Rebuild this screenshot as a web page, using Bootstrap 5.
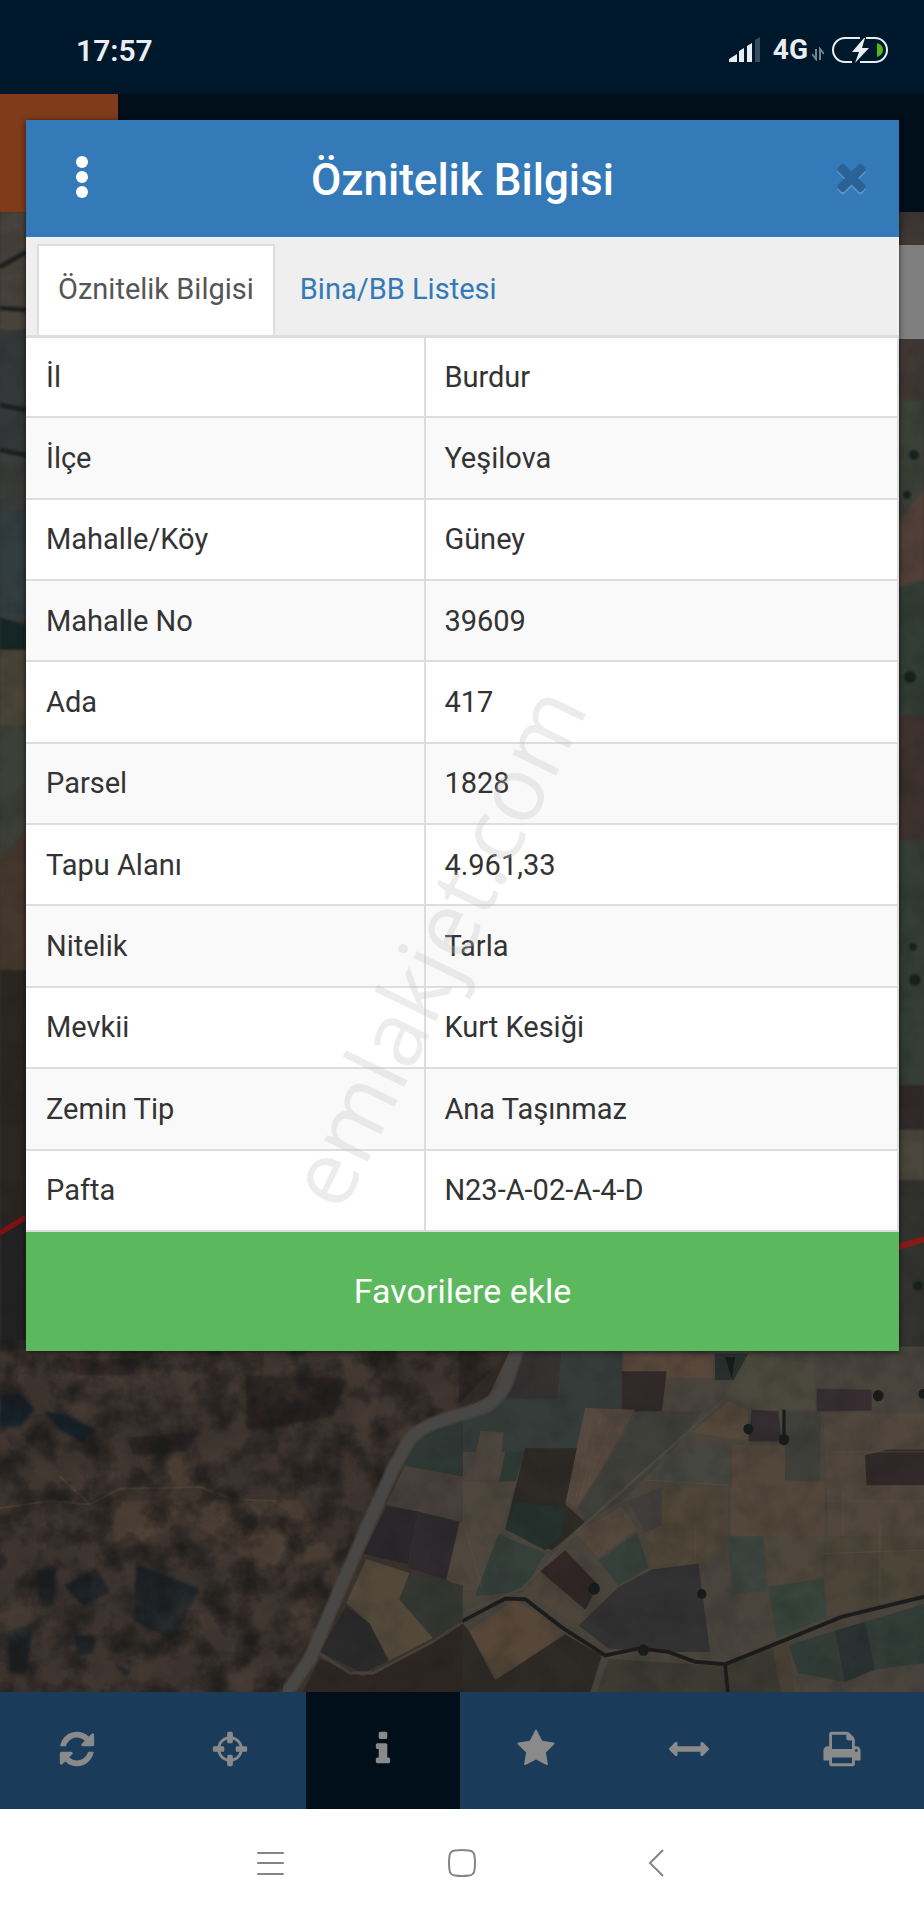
<!DOCTYPE html>
<html lang="tr">
<head>
  <meta charset="UTF-8">
  <title>Öznitelik Bilgisi</title>
  <meta name="viewport" content="width=device-width, initial-scale=1">
  <link href="https://cdn.jsdelivr.net/npm/bootstrap@5.3.2/dist/css/bootstrap.min.css" rel="stylesheet">
  <style>
    body { font-family: Roboto, "Liberation Sans", sans-serif; font-size: 29px; color: #333; background: #fff; }

    /* phone status bar */
    .status-bar { height: 94px; padding: 6px 32px 0 76px; background: #00182b; color: #e8eef4; font-size: 30px; font-weight: 600; }
    .net-label { font-size: 28px; font-weight: 700; }

    /* dimmed app behind the dialog */
    .app-header { height: 118px; background: #000f1a; }
    .app-logo { width: 118px; background: #803b1b; }
    .map-area { background: #3a322d; overflow: hidden; }
    .map-area svg { position: absolute; inset: 0; width: 100%; height: 100%; }
    .map-panel { position: absolute; right: 0; top: 33px; width: 60px; height: 94px; background: #7f7f7f; }
    .tool-bar { background: #1a3c5a; padding-right: 5px; }
    .tool-btn { height: 117px; border: 0; padding: 0 0 6px; background: transparent; color: #8a8a8a; }
    .tool-btn.active { background: #000f1a; }
    .tool-btn svg { width: 40px; height: 40px; }
    .sys-nav { height: 111px; background: #fff; }
    .sys-nav button { width: 192px; border: 0; padding: 0 0 6px; background: transparent; }

    /* dialog lies over the map */
    .info-dialog { position: absolute; top: 120px; left: 26px; right: 25px; background: #fff; box-shadow: 0 1px 6px rgba(0, 0, 0, .6); }
    .dialog-head { height: 117px; background: #357ab8; color: #fff; padding: 2px 26px 0; }
    .dialog-head h1 { font-size: 44px; line-height: 52px; font-weight: 500; }
    .head-btn { border: 0; background: transparent; width: 60px; height: 60px; padding: 0; }
    .dialog-tabs { background: #efefef; border-bottom: 3px solid #ddd; padding: 7px 11px 0; }
    .dialog-tabs .nav-link { height: 91px; padding: 0 19px 2px; border: 2px solid transparent; border-bottom: 0; border-radius: 0; margin: 0; color: #337ab7; }
    .dialog-tabs .nav-link.active { background: #fff; border-color: #ddd; color: #555; }
    .info-table { table-layout: fixed; height: 894px; margin: 0; border-right: 2px solid #ddd; --bs-table-color: #333; }
    .info-table th, .info-table td { font-weight: 400; padding: 0 18px; line-height: 40px; border: 0; border-bottom: 2px solid #ddd; vertical-align: middle; box-shadow: none; }
    .info-table th { width: 45.8%; padding-left: 20px; border-right: 2px solid #ddd; }
    .info-table tr:nth-child(even) > * { background: #f9f9f9; }
    .fav-btn { height: 119px; border: 0; background: #5cb85c; color: #fff; font-size: 34px; }
    .watermark { position: absolute; inset: 0; width: 100%; height: 100%; pointer-events: none; }
    .watermark text { font-family: "Open Sans", "Noto Sans", sans-serif; font-size: 90px; fill: #bfbfbf; fill-opacity: .3; }
  </style>
</head>
<body>

<div class="d-flex flex-column min-vh-100 position-relative">

  <div class="status-bar d-flex justify-content-between align-items-center">
    <span>17:57</span>
    <div class="d-flex align-items-center">
      <svg width="32" height="26" viewBox="0 0 32 26" fill="#e8eef4">
        <path d="M0 25V22L8 17V25zM10 25V14L15 11V25zM18 25V9L23 6V25z"/>
        <path d="M26 25V3L31 0V25z" fill="#364a59"/>
      </svg>
      <span class="net-label ms-2 ps-1">4G</span>
      <svg class="ms-1 mt-2" width="12" height="14" viewBox="0 0 12 14" fill="none" stroke="#76828c" stroke-width="2">
        <path d="M4 2V12L0 7M8 13V2L12 7"/>
      </svg>
      <svg class="ms-1" width="64" height="28" viewBox="0 0 64 28">
        <g fill="none" stroke="#e8eef4" stroke-width="2">
          <path d="M32 2H17A12 12 0 0 0 17 26H24M38 2H47A12 12 0 0 1 47 26H32"/>
        </g>
        <path d="M36 2L24 16H31L27 27L41 12H34L37 2z" fill="#e8eef4"/>
        <path d="M49 7Q55 9 55 14Q55 19 49 21z" fill="#54b51c"/>
      </svg>
    </div>
  </div>

  <div class="app-header d-flex">
    <div class="app-logo"></div>
  </div>

  <!-- satellite map -->
  <div class="map-area flex-grow-1 position-relative">
    <svg viewBox="0 212 924 1480" preserveAspectRatio="xMidYMid slice" aria-hidden="true">
      <defs>
        <filter id="soft" x="0" y="0" width="1" height="1"><feGaussianBlur stdDeviation="1"/></filter>
        <filter id="smudge"><feGaussianBlur stdDeviation="5"/></filter>
        <filter id="grain" x="0" y="0" width="1" height="1" color-interpolation-filters="sRGB">
          <feTurbulence type="fractalNoise" baseFrequency=".035" numOctaves="5" seed="8"/>
          <feColorMatrix values="0 0 0 0 .1  0 0 0 0 .1  0 0 0 0 .1  2.4 0 0 0 -.95"/>
        </filter>
        <filter id="glow" x="0" y="0" width="1" height="1" color-interpolation-filters="sRGB">
          <feTurbulence type="fractalNoise" baseFrequency=".02" numOctaves="5" seed="21"/>
          <feColorMatrix values="0 0 0 0 .38  0 0 0 0 .31  0 0 0 0 .26  0 2.4 0 0 -1"/>
        </filter>
        <clipPath id="scrub"><path d="M0 1340H520L455 1408L410 1436L385 1490L285 1692H0z"/></clipPath>
      </defs>
      <rect y="212" width="924" height="1480" fill="#3c332e"/>

      <!-- narrow strips beside the dialog -->
      <g filter="url(#soft)">
        <path fill="#46423b" d="M0 212H26V330H0z"/>
        <path fill="#363838" d="M0 330H26V450H0z"/>
        <path fill="#3a3c3a" d="M0 450H26V510H0z"/>
        <path fill="#333d3f" d="M0 510H26V620H0z"/>
        <path fill="#182627" d="M0 617L26 625V650H0z"/>
        <path fill="#4c4439" d="M0 650H26V725H0z"/>
        <path fill="#3e4039" d="M0 725H26V830L0 860z"/>
        <path fill="#45392f" d="M0 860L26 832V970H0z"/>
        <path fill="#2a2624" d="M0 970H26V1230H0z"/>
        <path fill="#222223" d="M0 1230L26 1216V1350H0z"/>
        <path stroke="#1a2020" stroke-width="5" d="M0 267L26 252M0 308L26 310M0 405L26 410M0 450L26 455"/>
        <path fill="#403936" d="M899 212H924V400H899z"/>
        <path fill="#3a4038" d="M899 400H924V520H899z"/>
        <path fill="#514137" d="M899 520L924 490V580L899 587z"/>
        <path fill="#303c35" d="M899 587L924 580V715H899z"/>
        <path fill="#3c302e" d="M899 715H924V840H899z"/>
        <path fill="#363d39" d="M899 840H924V1085H899z"/>
        <path fill="#332c2a" d="M899 1085H924V1130H899z"/>
        <path fill="#4c463d" d="M899 1130H924V1180H899z"/>
        <path fill="#33312f" d="M899 1180H924V1360H899z"/>
        <g fill="#12201f">
          <circle cx="914" cy="455" r="5"/><circle cx="907" cy="495" r="4"/><circle cx="910" cy="677" r="6"/>
          <circle cx="915" cy="980" r="6"/><circle cx="913" cy="947" r="4"/><circle cx="918" cy="1286" r="5"/>
        </g>
      </g>

      <!-- fields, right side -->
      <g transform="translate(462 1150) scale(.333 .351)" filter="url(#soft)">
        <path fill="#49443c" d="M0 560H1400V1560H0z"/>
        <path fill="#322a27" d="M-10 560H150L80 700L-10 750z"/>
        <path fill="#363330" d="M160 575H300L285 720L90 710z"/>
        <path fill="#363d3a" d="M300 575H480V740L340 870L180 860L-10 860V780L80 710H285z"/>
        <path fill="#58473a" d="M485 580H755V650H485z"/>
        <path fill="#2b302d" d="M760 580H860L830 655H760z"/>
        <path fill="#322c2a" d="M480 630H615L600 745H480z"/>
        <path fill="#4c483e" d="M860 580L1060 610V740H880L790 700z"/>
        <path fill="#574a3f" d="M370 735L520 740L410 920L345 1020L310 1000z"/>
        <path fill="#413f3b" d="M530 745H720L640 850L480 1000L370 1060L350 1020z"/>
        <path fill="#54483a" d="M690 805L800 715L860 740V830z"/>
        <path fill="#362f30" d="M870 740L950 745L960 830H860z"/>
        <path fill="#413f3b" d="M975 745H1078L1075 945L970 940z"/>
        <path fill="#372f30" d="M1065 680L1230 683V742L1065 745z"/>
        <path fill="#51473c" d="M1085 750H1400V1100H1100z"/>
        <path fill="#52463a" d="M810 840H970V945H1090V1100H810z"/>
        <path fill="#45473f" d="M600 870L800 845V960L570 940z"/>
        <path fill="#32292a" d="M1210 870L1280 853H1390V955H1215z"/>
        <path fill="#4d443e" d="M55 800L125 805L110 945L25 940z"/>
        <path fill="#2e3a34" d="M130 860H190L160 945H112z"/>
        <path fill="#2d2a28" d="M190 850H345L310 1010L370 1060L270 1140L130 1080z"/>
        <path fill="#27302e" d="M165 1000L310 1020L300 1100L250 1140L130 1080z"/>
        <path fill="#50473c" d="M-5 945H165L110 1100L45 1255H-5z"/>
        <path fill="#353f3a" d="M110 1095L250 1150L180 1260L40 1270z"/>
        <path fill="#403e3b" d="M500 1000L600 960V1070L550 1090z"/>
        <path fill="#55493d" d="M340 1090L480 1015L525 1080L410 1160z"/>
        <path fill="#4f4539" d="M600 960H800V1100L730 1180L570 1195L550 1090L600 1070z"/>
        <path fill="#343f3b" d="M410 1170L525 1090L560 1190L470 1240z"/>
        <path fill="#312725" d="M235 1200L310 1140L410 1240L370 1310z"/>
        <path fill="#4f443a" d="M180 1260L235 1210L365 1325L350 1355z"/>
        <path fill="#333330" d="M470 1245L570 1195L710 1178L745 1430L620 1430L440 1420L350 1355z"/>
        <path fill="#3c4541" d="M800 1100H905L915 1255L810 1265z"/>
        <path fill="#50473b" d="M905 1100H1090L1080 1225L920 1245z"/>
        <path fill="#37443a" d="M920 1245L1085 1220L1095 1330L945 1390z"/>
        <path fill="#4d4439" d="M1090 1100H1400V1260L1095 1330z"/>
        <path fill="#564638" d="M20 1370L160 1280L310 1375L110 1510z"/>
        <path fill="#2d2b28" d="M-5 1340L20 1370L100 1510L310 1380L420 1440L380 1560H-5z"/>
        <path fill="#3b3b33" d="M440 1450L780 1470L940 1410L1000 1560H400z"/>
        <path fill="#323d37" d="M980 1410L1400 1290V1460L1240 1480L1150 1515L1010 1490z"/>
        <path fill="#2a3230" d="M1120 1370L1210 1345L1240 1480L1150 1515z"/>
        <path fill="#4a4034" d="M930 1400L980 1395L1000 1560H960z"/>
        <path fill="none" stroke="#4e493f" stroke-width="8" d="M800 700L340 1090L180 1250L0 1320"/>
        <path fill="none" stroke="#1e1e1b" stroke-width="11" d="M-10 1348L130 1278L190 1280L300 1360L430 1440L530 1420L620 1430L700 1458L790 1465L960 1400L1140 1330L1400 1270M790 1465L800 1560"/>
        <path fill="none" stroke="#65533f" stroke-width="3" opacity=".5" d="M390 750L340 1000M420 750L355 990M460 750L370 970M0 1040L60 1250M810 960V1100M1145 970V1100M1255 1060V1290M550 940L800 955M700 1070V1170M1080 1000H1400M1100 860H1400M1080 1150L1390 1140"/>
        <g fill="#191c1b">
          <circle cx="1250" cy="700" r="16"/><circle cx="860" cy="795" r="15"/><circle cx="967" cy="825" r="16"/>
          <path d="M962 740H972V820H962zM790 590H820L810 650z"/>
          <circle cx="397" cy="1250" r="17"/><circle cx="720" cy="1265" r="14"/><circle cx="545" cy="1425" r="16"/><circle cx="1385" cy="695" r="14"/>
        </g>
      </g>

      <!-- scrub and road, left side -->
      <g transform="translate(0 1150) scale(.333 .351)">
        <g filter="url(#smudge)">
          <path fill="#15222a" d="M0 700L60 690L105 740L60 790H0zM130 745L200 750L290 800L250 835L180 800z"/>
          <path fill="#1d2225" d="M110 1200L170 1190L160 1300H120zM190 1240L290 1190L330 1260L250 1300zM410 1180L600 1250L520 1400L400 1340zM220 1380L290 1385L280 1435H230zM20 1370L100 1350L80 1490H30zM340 1465L395 1480L380 1505z"/>
          <path fill="#2a2423" d="M190 590L420 600L400 640L220 640zM740 640L1040 650L1000 760L740 800zM380 820L600 800L560 860L400 870z"/>
          <path fill="#463a32" d="M330 1000L900 1000L1000 1160L800 1200L560 1050L350 1150zM420 870L600 880L560 960L440 950z"/>
        </g>
        <g filter="url(#soft)">
          <path fill="none" stroke="#4e4036" stroke-width="6" d="M0 1020L150 1000L270 1010L360 965L600 960L700 995L830 1000M180 930L270 1010"/>
          <path fill="#2f3735" d="M1240 830L1390 750V930L1215 900z"/>
          <path fill="#46413a" d="M1215 900L1390 930V1060L1160 1010z"/>
          <path fill="#29272a" d="M1160 1015L1255 1030L1225 1180L1090 1150z"/>
          <path fill="#2f2c2d" d="M1255 1030L1380 1060L1345 1225L1225 1190z"/>
          <path fill="#50473c" d="M1380 1060H1390V1250L1340 1225z"/>
          <path fill="#52483a" d="M1100 1165L1230 1205L1200 1280L1300 1390L1170 1455L1110 1350L1040 1290z"/>
          <path fill="#363830" d="M1230 1205L1390 1240V1340L1300 1390L1200 1280z"/>
          <path fill="#2a292a" d="M1040 1300L1110 1350L1165 1455L1090 1490L960 1430z"/>
          <path fill="#2d2724" d="M960 1450L1090 1500L1390 1350V1560H900z"/>
          <path fill="none" stroke="#464239" stroke-width="8" d="M960 1435L1050 1490L1120 1490L1300 1400L1390 1345"/>
        </g>
      </g>

      <!-- ground texture -->
      <g clip-path="url(#scrub)">
        <rect y="1340" width="530" height="352" filter="url(#glow)" opacity=".35"/>
        <rect y="1340" width="530" height="352" filter="url(#grain)" opacity=".75"/>
      </g>
      <rect y="212" width="924" height="1480" filter="url(#grain)" opacity=".2"/>
      <path fill="none" stroke="#4a4744" stroke-width="13" stroke-linejoin="round" filter="url(#soft)" d="M530 1310L507 1382Q498 1402 482 1408L443 1420Q418 1428 408 1442L393 1469L366 1529L340 1589L310 1659L283 1698"/>
      <path fill="none" stroke="#7d1013" stroke-width="5" d="M0 1233L26 1217"/>
      <path fill="none" stroke="#8a1a18" stroke-width="6" d="M895 1248L924 1239"/>
    </svg>
    <div class="map-panel"></div>
  </div>

  <!-- map tools -->
  <div class="tool-bar d-flex">
    <button type="button" class="tool-btn flex-fill" aria-label="Yenile">
      <svg viewBox="0 0 1792 1792" fill="currentColor"><path d="M1639 1056q0 5-1 7-64 268-268 434.500t-478 166.500q-146 0-282.500-55t-243.500-157l-129 129q-19 19-45 19t-45-19-19-45v-448q0-26 19-45t45-19h448q26 0 45 19t19 45-19 45l-137 137q71 66 161 102t187 36q134 0 250-65t186-179q11-17 53-117 8-23 30-23h192q13 0 22.500 9.500t9.500 22.500zm25-800v448q0 26-19 45t-45 19h-448q-26 0-45-19t-19-45 19-45l138-138q-148-137-349-137-134 0-250 65t-186 179q-11 17-53 117-8 23-30 23h-199q-13 0-22.500-9.500t-9.500-22.500v-7q65-268 270-434.500t480-166.500q146 0 284 55.500t245 156.500l130-129q19-19 45-19t45 19 19 45z"/></svg>
    </button>
    <button type="button" class="tool-btn flex-fill" aria-label="Konum">
      <svg viewBox="0 0 1792 1792" fill="currentColor"><path d="M1325 1024h-109q-26 0-45-19t-19-45v-128q0-26 19-45t45-19h109q-32-108-112.500-188.500t-188.500-112.500v109q0 26-19 45t-45 19h-128q-26 0-45-19t-19-45v-109q-108 32-188.500 112.500t-112.500 188.500h109q26 0 45 19t19 45v128q0 26-19 45t-45 19h-109q32 108 112.500 188.500t188.500 112.500v-109q0-26 19-45t45-19h128q26 0 45 19t19 45v109q108-32 188.500-112.500t112.500-188.500zm339-192v128q0 26-19 45t-45 19h-143q-37 161-154.500 278.500t-278.500 154.500v143q0 26-19 45t-45 19h-128q-26 0-45-19t-19-45v-143q-161-37-278.500-154.500t-154.500-278.500h-143q-26 0-45-19t-19-45v-128q0-26 19-45t45-19h143q37-161 154.500-278.500t278.500-154.500v-143q0-26 19-45t45-19h128q26 0 45 19t19 45v143q161 37 278.500 154.500t154.500 278.500h143q26 0 45 19t19 45z"/></svg>
    </button>
    <button type="button" class="tool-btn flex-fill active" aria-label="Bilgi">
      <svg viewBox="0 0 1792 1792" fill="currentColor"><path d="M1216 1344v128q0 26-19 45t-45 19h-512q-26 0-45-19t-19-45v-128q0-26 19-45t45-19h64v-384h-64q-26 0-45-19t-19-45v-128q0-26 19-45t45-19h384q26 0 45 19t19 45v576h64q26 0 45 19t19 45zm-128-1152v192q0 26-19 45t-45 19h-256q-26 0-45-19t-19-45v-192q0-26 19-45t45-19h256q26 0 45 19t19 45z"/></svg>
    </button>
    <button type="button" class="tool-btn flex-fill" aria-label="Favoriler">
      <svg viewBox="0 0 1792 1792" fill="currentColor"><path d="M1728 647q0 22-26 48l-363 354 86 500q1 7 1 20 0 21-10.500 35.500t-30.500 14.500q-19 0-40-12l-449-236-449 236q-22 12-40 12-21 0-31.500-14.500t-10.500-35.500q0-6 2-20l86-500-364-354q-25-27-25-48 0-37 56-46l502-73 225-455q19-41 49-41t49 41l225 455 502 73q56 9 56 46z"/></svg>
    </button>
    <button type="button" class="tool-btn flex-fill" aria-label="Ölçüm">
      <svg viewBox="0 0 1792 1792" fill="currentColor"><path d="M1792 896q0 26-19 45l-256 256q-19 19-45 19t-45-19-19-45v-128h-1024v128q0 26-19 45t-45 19-45-19l-256-256q-19-19-19-45t19-45l256-256q19-19 45-19t45 19 19 45v128h1024v-128q0-26 19-45t45-19 45 19l256 256q19 19 19 45z"/></svg>
    </button>
    <button type="button" class="tool-btn flex-fill" aria-label="Yazdır">
      <svg viewBox="0 0 1792 1792" fill="currentColor"><path d="M448 1536h896v-256h-896v256zm0-640h896v-384h-160q-40 0-68-28t-28-68v-160h-640v640zm1152 64q0-26-19-45t-45-19-45 19-19 45 19 45 45 19 45-19 19-45zm128 0v416q0 13-9.500 22.500t-22.500 9.500h-224v160q0 40-28 68t-68 28h-960q-40 0-68-28t-28-68v-160h-224q-13 0-22.500-9.500t-9.500-22.500v-416q0-79 56.500-135.500t135.500-56.500h64v-544q0-40 28-68t68-28h672q40 0 88 20t76 48l152 152q28 28 48 76t20 88v256h64q79 0 135.500 56.500t56.500 135.500z"/></svg>
    </button>
  </div>

  <!-- phone navigation -->
  <div class="sys-nav d-flex justify-content-center">
    <button type="button" aria-label="Menü">
      <svg width="28" height="28" viewBox="0 0 28 28" stroke="#858585" stroke-width="2" stroke-linecap="round"><path d="M2 4H27M2 14H27M2 25H27"/></svg>
    </button>
    <button type="button" aria-label="Ana ekran">
      <svg width="28" height="28" viewBox="0 0 28 28" fill="none" stroke="#858585" stroke-width="2"><path d="M7 1.500Q14 .5 21 1.500Q26 2 26.500 7Q27.500 14 26.500 21Q26 26 21 26.500Q14 27.500 7 26.500Q2 26 1.500 21Q.5 14 1.500 7Q2 2 7 1.500z"/></svg>
    </button>
    <button type="button" aria-label="Geri">
      <svg width="28" height="28" viewBox="0 0 28 28" fill="none" stroke="#858585" stroke-width="2"><path d="M23 1L10 14L23 27"/></svg>
    </button>
  </div>

  <!-- attribute dialog -->
  <div class="info-dialog" role="dialog" aria-labelledby="dialogTitle">
    <div class="dialog-head d-flex align-items-center justify-content-between">
      <button type="button" class="head-btn mb-2" aria-label="Seçenekler">
        <svg width="12" height="42" viewBox="0 0 12 42" fill="#fff"><circle cx="6" cy="6" r="6"/><circle cx="6" cy="21" r="6"/><circle cx="6" cy="36" r="6"/></svg>
      </button>
      <h1 class="m-0" id="dialogTitle">Öznitelik Bilgisi</h1>
      <button type="button" class="head-btn mb-2 text-end" aria-label="Kapat">
        <svg width="43" height="43" viewBox="0 0 1792 1792">
          <path fill="#5b96cb" transform="translate(0 84)" d="M1490 1322q0 40-28 68l-136 136q-28 28-68 28t-68-28l-294-294-294 294q-28 28-68 28t-68-28l-136-136q-28-28-28-68t28-68l294-294-294-294q-28-28-28-68t28-68l136-136q28-28 68-28t68 28l294 294 294-294q28-28 68-28t68 28l136 136q28 28 28 68t-28 68l-294 294 294 294q28 28 28 68z"/>
          <path fill="#2a6296" d="M1490 1322q0 40-28 68l-136 136q-28 28-68 28t-68-28l-294-294-294 294q-28 28-68 28t-68-28l-136-136q-28-28-28-68t28-68l294-294-294-294q-28-28-28-68t28-68l136-136q28-28 68-28t68 28l294 294 294-294q28-28 68-28t68 28l136 136q28 28 28 68t-28 68l-294 294 294 294q28 28 28 68z"/>
        </svg>
      </button>
    </div>

    <div class="dialog-tabs d-flex gap-1">
      <button type="button" class="nav-link active">Öznitelik Bilgisi</button>
      <button type="button" class="nav-link">Bina/BB Listesi</button>
    </div>

    <div class="position-relative">
      <table class="table info-table">
        <tbody>
          <tr><th scope="row">İl</th><td>Burdur</td></tr>
          <tr><th scope="row">İlçe</th><td>Yeşilova</td></tr>
          <tr><th scope="row">Mahalle/Köy</th><td>Güney</td></tr>
          <tr><th scope="row">Mahalle No</th><td>39609</td></tr>
          <tr><th scope="row">Ada</th><td>417</td></tr>
          <tr><th scope="row">Parsel</th><td>1828</td></tr>
          <tr><th scope="row">Tapu Alanı</th><td>4.961,33</td></tr>
          <tr><th scope="row">Nitelik</th><td>Tarla</td></tr>
          <tr><th scope="row">Mevkii</th><td>Kurt Kesiği</td></tr>
          <tr><th scope="row">Zemin Tip</th><td>Ana Taşınmaz</td></tr>
          <tr><th scope="row">Pafta</th><td>N23-A-02-A-4-D</td></tr>
        </tbody>
      </table>
      <svg class="watermark" viewBox="0 0 873 894" aria-hidden="true">
        <text transform="translate(316 876) rotate(-64)">emlakjet.com</text>
      </svg>
    </div>

    <button type="button" class="fav-btn w-100">Favorilere ekle</button>
  </div>
</div>

<script src="https://cdn.jsdelivr.net/npm/bootstrap@5.3.2/dist/js/bootstrap.bundle.min.js"></script>
</body>
</html>
